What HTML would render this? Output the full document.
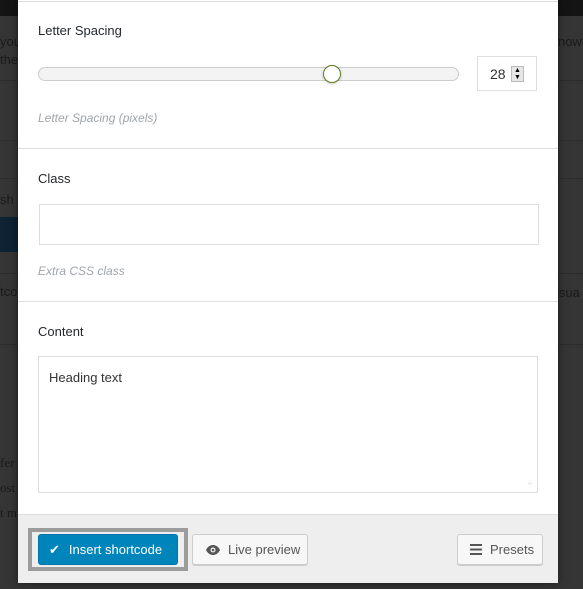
<!DOCTYPE html>
<html><head><style>
*{box-sizing:border-box;margin:0;padding:0}
body{width:583px;height:589px;overflow:hidden;background:#353535;font-family:"Liberation Sans",sans-serif;position:relative}
.bg{position:absolute;color:#1a1a1a;font-size:13px}
.m{position:absolute;left:18px;top:0;width:540px;height:583px;background:#fff;box-shadow:0 0 8px rgba(0,0,0,.5)}
.a{position:absolute}
.lbl{font-size:13px;color:#23282d}
.desc{font-size:12px;color:#a0a5aa;font-style:italic}
.sep{position:absolute;left:0;width:540px;height:1px;background:#ddd}
.btn{position:absolute;top:534px;height:31px;border:1px solid #ccc;border-radius:3px;background:#f7f7f7;font-size:13px;color:#555;box-shadow:0 1px 0 #ccc;display:flex;align-items:center;padding-left:12px}
</style></head><body>
<div class="bg" style="left:0;top:0;width:583px;height:16px;background:#141414"></div>
<div class="bg" style="left:0;top:80px;width:583px;height:1px;background:#2c2c2c"></div>
<div class="bg" style="left:0;top:140px;width:583px;height:1px;background:#2c2c2c"></div>
<div class="bg" style="left:0;top:178px;width:583px;height:1px;background:#2c2c2c"></div>
<div class="bg" style="left:0;top:217px;width:20px;height:35px;background:#0e2233"></div>
<div class="bg" style="left:0;top:273px;width:583px;height:1px;background:#2c2c2c"></div>
<div class="bg" style="left:0;top:344px;width:583px;height:1px;background:#2c2c2c"></div>
<div class="bg" style="left:0;top:34px">you</div>
<div class="bg" style="left:0;top:52px">the</div>
<div class="bg" style="left:0;top:192px">sh</div>
<div class="bg" style="left:0;top:284px">tco</div>
<div class="bg" style="left:558px;top:34px">now</div>
<div class="bg" style="left:556px;top:285px">isua</div>
<div class="bg" style="left:0;top:455px;font-family:'Liberation Serif',serif">fer</div>
<div class="bg" style="left:0;top:480px;font-family:'Liberation Serif',serif">ost</div>
<div class="bg" style="left:0;top:505px;font-family:'Liberation Serif',serif">t m</div>
<div class="m">
 <div class="sep" style="top:1px"></div>
 <div class="a lbl" style="left:20px;top:23px">Letter Spacing</div>
 <div class="a" style="left:20px;top:67px;width:421px;height:14px;border:1px solid #ccc;border-radius:7px;background:#f3f3f3"></div>
 <div class="a" style="left:305px;top:65px;width:18px;height:18px;border:1px solid #5d7a1f;border-radius:50%;background:#fff;box-shadow:0 1px 3px rgba(0,0,0,.2)"></div>
 <div class="a" style="left:459px;top:56px;width:60px;height:35px;border:1px solid #ddd"></div>
 <div class="a" style="left:472px;top:66px;font-size:14px;color:#333">28</div>
 <div class="a" style="left:493px;top:66px;width:13px;height:16px;background:#e6e6e6;border:1px solid #bbb;font-size:7px;line-height:7px;text-align:center;color:#000">▲<br>▼</div>
 <div class="a desc" style="left:20px;top:111px">Letter Spacing (pixels)</div>
 <div class="sep" style="top:148px"></div>
 <div class="a lbl" style="left:20px;top:171px">Class</div>
 <div class="a" style="left:21px;top:204px;width:500px;height:41px;border:1px solid #ddd"></div>
 <div class="a desc" style="left:20px;top:264px">Extra CSS class</div>
 <div class="sep" style="top:301px"></div>
 <div class="a lbl" style="left:20px;top:324px">Content</div>
 <div class="a" style="left:20px;top:356px;width:500px;height:137px;border:1px solid #ddd"></div>
 <div class="a" style="left:31px;top:370px;font-size:13px;color:#333">Heading text</div>
 <div class="a" style="left:509px;top:482px;font-size:7px;color:#aaa;line-height:5px">⁘</div>
 <div class="a" style="left:0;top:514px;width:540px;height:69px;background:#eee;border-top:1px solid #ddd"></div>
 <div class="a" style="left:10px;top:528px;width:160px;height:43px;border:4px solid #9c9c9c"></div>
 <div class="a" style="left:20px;top:534px;width:140px;height:31px;background:#0085ba;border:1px solid #0073aa;border-radius:3px;color:#fff;font-size:13px;display:flex;align-items:center;padding-left:10px"><span style="font-size:13px;margin-right:9px">✔</span>Insert shortcode</div>
 <div class="btn" style="left:174px;width:116px"><svg width="16" height="12" viewBox="0 0 16 12" style="margin-right:7px"><path d="M1 6C3 2 6 1 8 1s5 1 7 5c-2 4-5 5-7 5S3 10 1 6z" fill="#555"/><circle cx="8" cy="6" r="2.5" fill="#f7f7f7"/><circle cx="8" cy="6" r="1.3" fill="#555"/></svg>Live preview</div>
 <div class="btn" style="left:439px;width:86px"><svg width="12" height="11" viewBox="0 0 12 11" style="margin-right:8px"><rect y="0" width="12" height="2" fill="#555"/><rect y="4.5" width="12" height="2" fill="#555"/><rect y="9" width="12" height="2" fill="#555"/></svg>Presets</div>
</div>
</body></html>
